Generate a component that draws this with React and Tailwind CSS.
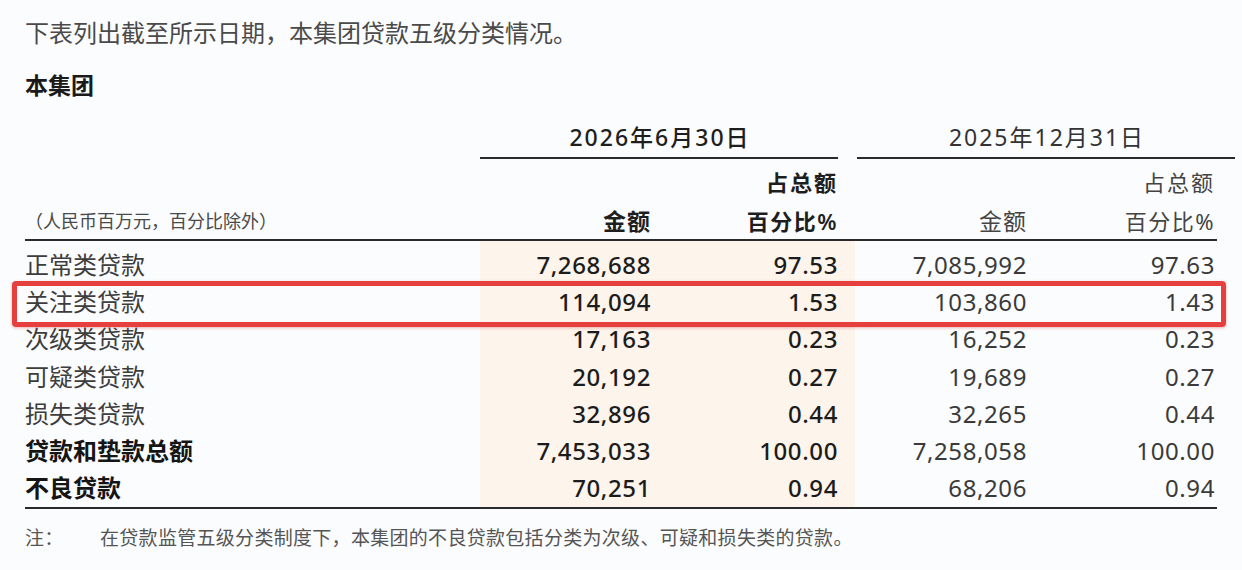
import React from 'react';

const rows = [
  { label: '正常类贷款', a1: '7,268,688', p1: '97.53', a2: '7,085,992', p2: '97.63' },
  { label: '关注类贷款', a1: '114,094', p1: '1.53', a2: '103,860', p2: '1.43' },
  { label: '次级类贷款', a1: '17,163', p1: '0.23', a2: '16,252', p2: '0.23' },
  { label: '可疑类贷款', a1: '20,192', p1: '0.27', a2: '19,689', p2: '0.27' },
  { label: '损失类贷款', a1: '32,896', p1: '0.44', a2: '32,265', p2: '0.44' },
  { label: '贷款和垫款总额', a1: '7,453,033', p1: '100.00', a2: '7,258,058', p2: '100.00', bold: true },
  { label: '不良贷款', a1: '70,251', p1: '0.94', a2: '68,206', p2: '0.94', bold: true },
];

// label | amount 2026 | pct 2026 | spacer | amount 2025 | pct 2025 | right pad
const cols = 'grid grid-cols-[455px_171px_187px_19px_170px_188px_20px]';

function Row({ row }) {
  const label = row.bold
    ? 'font-bold text-[#151515]'
    : 'font-normal text-[#3d3d3d]';
  return (
    <div className={`${cols} h-[37.3px] items-center text-[24px]`}>
      <div className={`${label} leading-none`}>{row.label}</div>
      <div className="h-full bg-[#fdf4eb] flex items-center justify-end tracking-[0.6px] font-medium text-[#1c1c1c]">
        {row.a1}
      </div>
      <div className="h-full bg-[#fdf4eb] flex items-center justify-end tracking-[0.6px] font-medium text-[#1c1c1c]">
        {row.p1}
      </div>
      <div className="h-full bg-[#fdf4eb] mr-[2px]" />
      <div className="text-right tracking-[0.6px] text-[#3a3a3a]">{row.a2}</div>
      <div className="text-right tracking-[0.6px] text-[#3a3a3a]">{row.p2}</div>
      <div />
    </div>
  );
}

export default function App() {
  return (
    <div
      className="relative w-[1242px] h-[570px] overflow-hidden bg-[#fbfcfd] px-[25px] pt-[15px]"
      style={{ fontFamily: '"Noto Sans", "Noto Sans CJK SC", sans-serif' }}
    >
      <p className="h-[36px] flex items-center text-[24px] text-[#4a4a4a]">
        下表列出截至所示日期，本集团贷款五级分类情况。
      </p>
      <p className="mt-[16px] h-[36px] flex items-center text-[23px] font-bold text-[#1a1a1a]">
        本集团
      </p>

      {/* date headers */}
      <div className={`${cols} mt-[16px]`}>
        <div />
        <div className="col-span-2 flex flex-col">
          <div className="h-[36px] flex items-center justify-center pl-[2px] text-[23px] tracking-[2px] font-medium text-[#1e1e1e]">
            2026年6月30日
          </div>
          <div className="mt-[2px] h-[2px] bg-[#2a2a2a]" />
        </div>
        <div />
        <div className="col-span-3 flex flex-col">
          <div className="h-[36px] flex items-center justify-center pl-[2px] text-[23px] tracking-[2px] text-[#333]">
            2025年12月31日
          </div>
          <div className="mt-[2px] h-[2px] bg-[#2a2a2a]" />
        </div>
      </div>

      {/* column headers */}
      <div className={`${cols} mt-[8px] h-[30px] items-center text-[22px]`}>
        <div />
        <div />
        <div className="text-right font-semibold tracking-[2px] text-[#1e1e1e] leading-none">占总额</div>
        <div />
        <div />
        <div className="text-right tracking-[2px] text-[#444] leading-none">占总额</div>
        <div />
      </div>
      <div className={`${cols} mt-[9px] h-[30px] items-center`}>
        <div className="text-[18px] text-[#4a4a4a] leading-none">（人民币百万元，百分比除外）</div>
        <div className="text-right text-[23px] font-semibold tracking-[1px] text-[#1e1e1e] leading-none">金额</div>
        <div className="text-right text-[22px] font-semibold tracking-[1.5px] text-[#1e1e1e] leading-none">百分比%</div>
        <div />
        <div className="text-right text-[23px] tracking-[1px] text-[#444] leading-none">金额</div>
        <div className="text-right text-[22px] tracking-[1.5px] text-[#444] leading-none">百分比%</div>
        <div />
      </div>
      <div className="mt-[3px] h-[2px] bg-[#2a2a2a]" />

      {/* body */}
      <div className={`${cols} h-[5px]`}>
        <div />
        <div className="bg-[#fdf4eb] col-span-3 mr-[2px]" />
      </div>
      {rows.map((row) => (
        <Row key={row.label} row={row} />
      ))}
      <div className="h-[2px] bg-[#2a2a2a]" />

      <div className="mt-[20px] flex items-center text-[19px] tracking-[0.3px] text-[#555] leading-none">
        <span className="w-[75px]">注：</span>
        <span>在贷款监管五级分类制度下，本集团的不良贷款包括分类为次级、可疑和损失类的贷款。</span>
      </div>

      {/* highlight box */}
      <div className="absolute left-[12px] top-[281px] w-[1214px] h-[46px] border-[5px] border-[#e5403d] rounded-[4px] shadow-[0_1px_3px_rgba(200,40,40,0.35)]" />
    </div>
  );
}
